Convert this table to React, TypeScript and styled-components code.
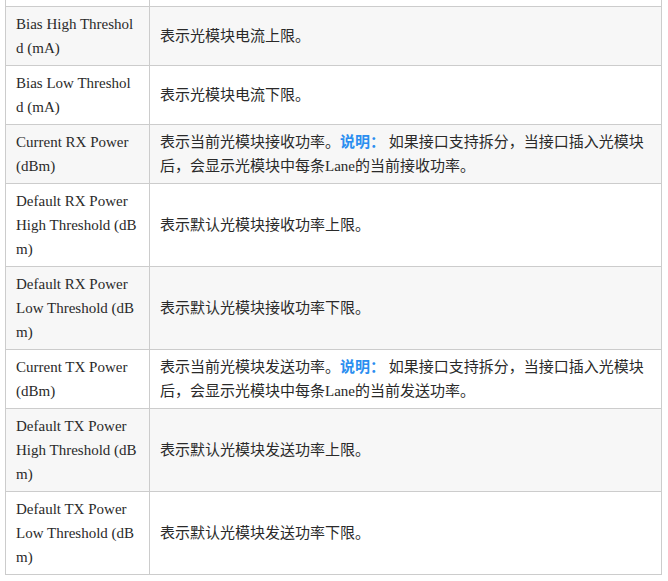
import React from "react";
import styled, { createGlobalStyle } from "styled-components";

const GlobalStyle = createGlobalStyle`
  html, body {
    margin: 0;
    padding: 0;
    background: #ffffff;
  }
`;

const Page = styled.div`
  padding: 0 6px 0 5px;
  overflow: hidden;
  height: 581px;
`;

const Table = styled.table`
  width: 657px;
  margin-top: -1px;
  border-collapse: collapse;
  table-layout: fixed;
  font-family: "Liberation Serif", "Noto Sans CJK SC", serif;
  font-size: 15px;
  line-height: 24px;
  color: #2a2a2a;
`;

const Row = styled.tr<{ $striped?: boolean }>`
  background: ${(p) => (p.$striped ? "#f7f7f7" : "#ffffff")};
`;

const StubCell = styled.td<{ $first?: boolean }>`
  width: ${(p) => (p.$first ? "143px" : "auto")};
  height: 6px;
  padding: 0;
  border: 1px solid #cccccc;
`;

const NameCell = styled.td`
  padding: 5px 10px;
  border: 1px solid #cccccc;
  vertical-align: top;
`;

const DescCell = styled.td`
  padding: 5px 10px;
  border: 1px solid #cccccc;
  vertical-align: middle;
`;

const Note = styled.b`
  color: #2a8ef0;
  font-weight: bold;
`;

type Item = {
  name: string[];
  desc: string;
  note?: string;
};

const items: Item[] = [
  { name: ["Bias High Threshol", "d (mA)"], desc: "表示光模块电流上限。" },
  { name: ["Bias Low Threshol", "d (mA)"], desc: "表示光模块电流下限。" },
  {
    name: ["Current RX Power", "(dBm)"],
    desc: "表示当前光模块接收功率。",
    note: "如果接口支持拆分，当接口插入光模块后，会显示光模块中每条Lane的当前接收功率。",
  },
  {
    name: ["Default RX Power", "High Threshold (dB", "m)"],
    desc: "表示默认光模块接收功率上限。",
  },
  {
    name: ["Default RX Power", "Low Threshold (dB", "m)"],
    desc: "表示默认光模块接收功率下限。",
  },
  {
    name: ["Current TX Power", "(dBm)"],
    desc: "表示当前光模块发送功率。",
    note: "如果接口支持拆分，当接口插入光模块后，会显示光模块中每条Lane的当前发送功率。",
  },
  {
    name: ["Default TX Power", "High Threshold (dB", "m)"],
    desc: "表示默认光模块发送功率上限。",
  },
  {
    name: ["Default TX Power", "Low Threshold (dB", "m)"],
    desc: "表示默认光模块发送功率下限。",
  },
];

const App = () => {
  return (
    <Page>
      <GlobalStyle />
      <Table>
        <tbody>
          <Row>
            <StubCell $first />
            <StubCell />
          </Row>
          {items.map((item, i) => (
            <Row key={item.name.join(" ")} $striped={i % 2 === 0}>
              <NameCell>
                {item.name.map((line, j) => (
                  <React.Fragment key={j}>
                    {j > 0 && <br />}
                    {line}
                  </React.Fragment>
                ))}
              </NameCell>
              <DescCell>
                {item.desc}
                {item.note && (
                  <>
                    <Note>说明：</Note> {item.note}
                  </>
                )}
              </DescCell>
            </Row>
          ))}
        </tbody>
      </Table>
    </Page>
  );
};

export default App;
